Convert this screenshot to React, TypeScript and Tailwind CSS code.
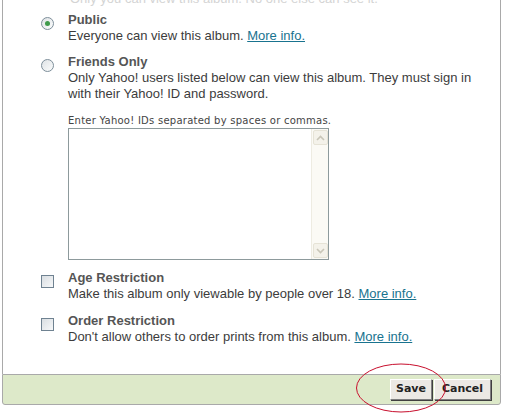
import React from "react";

function Radio({ checked }: { checked?: boolean }) {
  return (
    <span className="mt-[5px] flex h-[13px] w-[13px] shrink-0 items-center justify-center rounded-full border border-[#7d8e9a] bg-gradient-to-br from-[#dfe3e6] to-[#fbfcfc]">
      {checked && <span className="h-[5px] w-[5px] rounded-full bg-[#3f9a4b]" />}
    </span>
  );
}

function Check() {
  return (
    <span className="mt-[5px] h-[13px] w-[13px] shrink-0 border border-[#6f8291] bg-gradient-to-br from-[#d9dee2] to-[#f7f8f9]" />
  );
}

function Link({ children }: { children: React.ReactNode }) {
  return <a className="cursor-pointer text-[#19738f] underline">{children}</a>;
}

function Option({
  control,
  title,
  children,
}: {
  control: React.ReactNode;
  title: string;
  children: React.ReactNode;
}) {
  return (
    <div className="flex">
      <div className="flex w-[65px] shrink-0 justify-start pl-[38px]">{control}</div>
      <div className="text-[13px] leading-[16px] text-[#3c3c3c]">
        <div className="font-bold text-[#555]">{title}</div>
        {children}
      </div>
    </div>
  );
}

function ScrollBtn({ up }: { up?: boolean }) {
  return (
    <div className="flex h-[15px] w-[15px] items-center justify-center rounded-[2px] border border-[#e6e3d6] bg-[#f4f2ea]">
      <svg width="9" height="6" viewBox="0 0 9 6">
        <path
          d={up ? "M1 5 L4.5 1.5 L8 5" : "M1 1 L4.5 4.5 L8 1"}
          fill="none"
          stroke="#c9c6b8"
          strokeWidth="1.6"
        />
      </svg>
    </div>
  );
}

export default function App() {
  return (
    <div className="relative h-[416px] w-[505px] overflow-hidden bg-white font-['Liberation_Sans',Arial,sans-serif]">
      <div className="ml-[2px] w-[499px]">
        <div className="flow-root h-[374px] border-x border-[#a9a9a9]">
          <div className="-mt-[9px] pl-[67px] text-[13px] leading-[16px] text-[#d4d4d4]">
            Only you can view this album. No one else can see it.
          </div>
          <div className="pt-[5px]">
            <Option control={<Radio checked />} title="Public">
              <div>
                Everyone can view this album. <Link>More info.</Link>
              </div>
            </Option>
          </div>
          <div className="mt-[10px]">
            <Option control={<Radio />} title="Friends Only">
              <div className="w-[420px]">
                Only Yahoo! users listed below can view this album. They must sign in with their
                Yahoo! ID and password.
              </div>
            </Option>
          </div>
          <div className="mt-[13px] pl-[65px]">
            <div className="font-['DejaVu_Sans',Verdana,sans-serif] text-[10px] leading-[12px] tracking-[0.25px] text-[#444]">
              Enter Yahoo! IDs separated by spaces or commas.
            </div>
            <div className="mt-[1px] flex h-[132px] w-[261px] border border-[#8d9a9c] bg-white">
              <div className="flex-1" />
              <div className="flex w-[17px] flex-col justify-between border-l border-[#eeece2] bg-[#fbfaf5] p-[1px]">
                <ScrollBtn up />
                <ScrollBtn />
              </div>
            </div>
          </div>
          <div className="mt-[10px]">
            <Option control={<Check />} title="Age Restriction">
              <div>
                Make this album only viewable by people over 18. <Link>More info.</Link>
              </div>
            </Option>
          </div>
          <div className="mt-[11px]">
            <Option control={<Check />} title="Order Restriction">
              <div>
                Don't allow others to order prints from this album. <Link>More info.</Link>
              </div>
            </Option>
          </div>
        </div>
        <div className="flex h-[31px] items-center justify-end gap-[2px] rounded-b-[3px] border border-[#a9a9a9] bg-[#dde9c9] pr-[9px]">
          <button className="h-[21px] w-[42px] border border-t-white border-l-white border-r-[#808080] border-b-[#808080] bg-[#ece9e4] font-['DejaVu_Sans',Tahoma,sans-serif] text-[11px] font-bold text-[#222] shadow-[1px_1px_0_#404040]">
            Save
          </button>
          <button className="h-[21px] w-[57px] border border-t-white border-l-white border-r-[#808080] border-b-[#808080] bg-[#ece9e4] font-['DejaVu_Sans',Tahoma,sans-serif] text-[11px] font-bold text-[#222] shadow-[1px_1px_0_#404040]">
            Cancel
          </button>
        </div>
      </div>
      <svg
        className="pointer-events-none absolute left-[355px] top-[362px]"
        width="92"
        height="52"
        viewBox="0 0 92 52"
      >
        <ellipse cx="46" cy="26" rx="44.5" ry="24" fill="none" stroke="#c8102e" strokeWidth="1" />
      </svg>
    </div>
  );
}
